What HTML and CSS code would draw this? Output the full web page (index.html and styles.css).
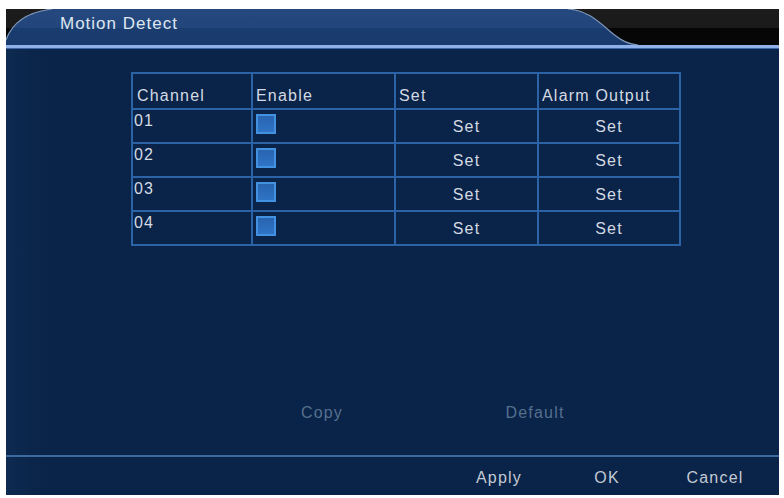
FILE: index.html
```html
<!DOCTYPE html>
<html>
<head>
<meta charset="utf-8">
<link rel="stylesheet" href="styles.css">
</head>
<body>
<div class="frame">
  <div class="header">
    <svg class="tab" width="773" height="36" viewBox="0 0 773 36">
      <defs>
        <linearGradient id="tabfill" x1="0" y1="0" x2="0" y2="1">
          <stop offset="0" stop-color="#25497f"/>
          <stop offset="0.52" stop-color="#22467c"/>
          <stop offset="0.53" stop-color="#1a3c6f"/>
          <stop offset="1" stop-color="#183a6c"/>
        </linearGradient>
      </defs>
      <path d="M0,36 L0,31 C6,14 22,3 46,0 L562,0 C582,1 594,14 606,24 C616,32 622,35 632,36 Z" fill="url(#tabfill)"/>
      <path d="M0,31 C6,14 22,3 46,0" fill="none" stroke="#8096b8" stroke-width="1.2"/>
      <path d="M562,0 C582,1 594,14 606,24 C616,32 622,35 632,36" fill="none" stroke="#8096b8" stroke-width="1.2"/>
    </svg>
    <div class="title">Motion Detect</div>
  </div>
  <div class="header-line"></div>
  <div class="main">
    <table class="grid">
      <colgroup>
        <col class="c1"><col class="c2"><col class="c3"><col class="c4">
      </colgroup>
      <thead>
        <tr><th>Channel</th><th>Enable</th><th>Set</th><th>Alarm Output</th></tr>
      </thead>
      <tbody>
        <tr><td class="ch">01</td><td><span class="check"></span></td><td class="set">Set</td><td class="set">Set</td></tr>
        <tr><td class="ch">02</td><td><span class="check"></span></td><td class="set">Set</td><td class="set">Set</td></tr>
        <tr><td class="ch">03</td><td><span class="check"></span></td><td class="set">Set</td><td class="set">Set</td></tr>
        <tr><td class="ch">04</td><td><span class="check"></span></td><td class="set">Set</td><td class="set">Set</td></tr>
      </tbody>
    </table>
    <div class="actions">
      <span class="btn dim">Copy</span>
      <span class="btn dim">Default</span>
    </div>
  </div>
  <div class="footer-line"></div>
  <div class="footer">
    <span class="btn">Apply</span>
    <span class="btn">OK</span>
    <span class="btn">Cancel</span>
  </div>
</div>
</body>
</html>
```
FILE: styles.css
```css
html, body {
  margin: 0;
  padding: 0;
  background: #ffffff;
}
body {
  font-family: "Liberation Sans", Arial, sans-serif;
}
.frame {
  margin: 9px 0 0 6px;
  width: 773px;
  height: 486px;
  display: flex;
  flex-direction: column;
  background: linear-gradient(90deg, #0e2a50 0, #0a2348 40px);
}
.header {
  position: relative;
  height: 36px;
  flex: none;
  background: linear-gradient(#1c1c1c 0, #1a1a1a 19px, #060606 19px, #050505 100%);
}
.tab {
  position: absolute;
  left: 0;
  top: 0;
  display: block;
}
.title {
  position: relative;
  padding: 5px 0 0 54px;
  font-size: 17px;
  line-height: 20px;
  letter-spacing: 1px;
  color: #dfe6f0;
}
.header-line {
  height: 3px;
  flex: none;
  background: #8fb0e8;
  border-bottom: 1px solid #3e66a6;
}
.main {
  flex: 1;
  display: flex;
  flex-direction: column;
}
.grid {
  margin: 23px 0 0 125px;
  table-layout: fixed;
  width: 550px;
  border-spacing: 2px;
  border-collapse: separate;
  background: #2c63a6;
  font-size: 16px;
  letter-spacing: 1.2px;
  color: #d4dae3;
}
.c1 { width: 118px; }
.c2 { width: 141px; }
.c3 { width: 141px; }
.c4 { width: 140px; }
.grid th,
.grid td {
  background: #0a2348;
  padding: 0;
  font-weight: normal;
  text-align: left;
  line-height: 18px;
}
.grid th {
  height: 34px;
  vertical-align: bottom;
  padding: 0 0 3px 3px;
  box-sizing: border-box;
}
.grid th:first-child {
  padding-left: 4px;
}
.grid td {
  height: 32px;
  box-sizing: border-box;
}
.grid td.ch {
  vertical-align: top;
  padding: 2px 0 0 1px;
}
.grid td.set {
  text-align: center;
  vertical-align: middle;
  padding-top: 2px;
}
.check {
  display: block;
  width: 20px;
  height: 20px;
  margin: 0 0 0 3px;
  box-sizing: border-box;
  border: 2px solid #4392e2;
  background: linear-gradient(#2864b0, #2f74c6);
}
.grid td:nth-child(2) {
  vertical-align: top;
  padding-top: 4px;
}
.actions {
  margin-top: auto;
  margin-bottom: 27px;
  height: 30px;
  display: flex;
  align-items: center;
  padding-left: 266px;
  gap: 113px;
}
.btn {
  width: 100px;
  text-align: center;
  font-size: 16px;
  letter-spacing: 1.2px;
  color: #c3cad4;
}
.btn.dim {
  color: #55708f;
}
.footer-line {
  height: 2px;
  flex: none;
  background: #3d6a9e;
}
.footer {
  height: 38px;
  flex: none;
  display: flex;
  align-items: center;
  justify-content: flex-end;
  padding-right: 24px;
  gap: 28px;
}
.footer .btn {
  width: 80px;
  padding-top: 4px;
}
```
